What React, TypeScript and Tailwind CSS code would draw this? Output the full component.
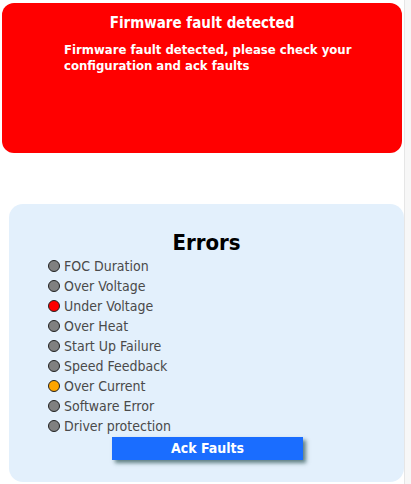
import { ReactElement } from 'react'

const errors: { label: string; color: string }[] = [
	{ label: 'FOC Duration', color: 'bg-[#808080]' },
	{ label: 'Over Voltage', color: 'bg-[#808080]' },
	{ label: 'Under Voltage', color: 'bg-[#ff0000]' },
	{ label: 'Over Heat', color: 'bg-[#808080]' },
	{ label: 'Start Up Failure', color: 'bg-[#808080]' },
	{ label: 'Speed Feedback', color: 'bg-[#808080]' },
	{ label: 'Over Current', color: 'bg-[#ffa500]' },
	{ label: 'Software Error', color: 'bg-[#808080]' },
	{ label: 'Driver protection', color: 'bg-[#808080]' },
]

const FaultBanner = (): ReactElement => (
	<div className="mx-[2px] mt-[3px] h-[150px] rounded-[12px] bg-[#ff0000] text-white font-bold">
		<div className="pt-[10px] text-center text-[15px] leading-[20px]">Firmware fault detected</div>
		<div className="mt-[9px] pl-[62px] pr-[40px] text-[13px] leading-[16px]">
			Firmware fault detected, please check your configuration and ack faults
		</div>
	</div>
)

const ErrorList = (): ReactElement => (
	<div className="ml-[9px] mt-[51px] h-[278px] rounded-[14px] bg-[#e3f0fc] pt-[27px]">
		<div className="text-center text-[22px] leading-[24px] font-bold text-black">Errors</div>
		<div className="mt-[1px] pl-[39px]">
			{errors.map(e => (
				<div key={e.label} className="flex items-center h-[20px]">
					<span className={`w-[12px] h-[12px] rounded-full border border-[#222] ${e.color}`} />
					<span className="ml-[4px] text-[14px] text-[#4a4a4a]">{e.label}</span>
				</div>
			))}
		</div>
		<div className="mt-0 ml-[103px]">
			<button className="w-[191px] h-[23px] bg-[#1a6dff] text-white font-bold text-[14px] leading-[23px] shadow-[3px_3px_4px_rgba(40,80,80,0.7)]">
				Ack Faults
			</button>
		</div>
	</div>
)

export default function App(): ReactElement {
	return (
		<div className="flex w-[411px] h-[484px] bg-white font-['DejaVu_Sans_Condensed','DejaVu_Sans',sans-serif]">
			<div className="w-[404px]">
				<FaultBanner />
				<ErrorList />
			</div>
			<div className="w-[7px] h-full bg-[#f7f7f7] border-l border-[#e6e6e6]" />
		</div>
	)
}
